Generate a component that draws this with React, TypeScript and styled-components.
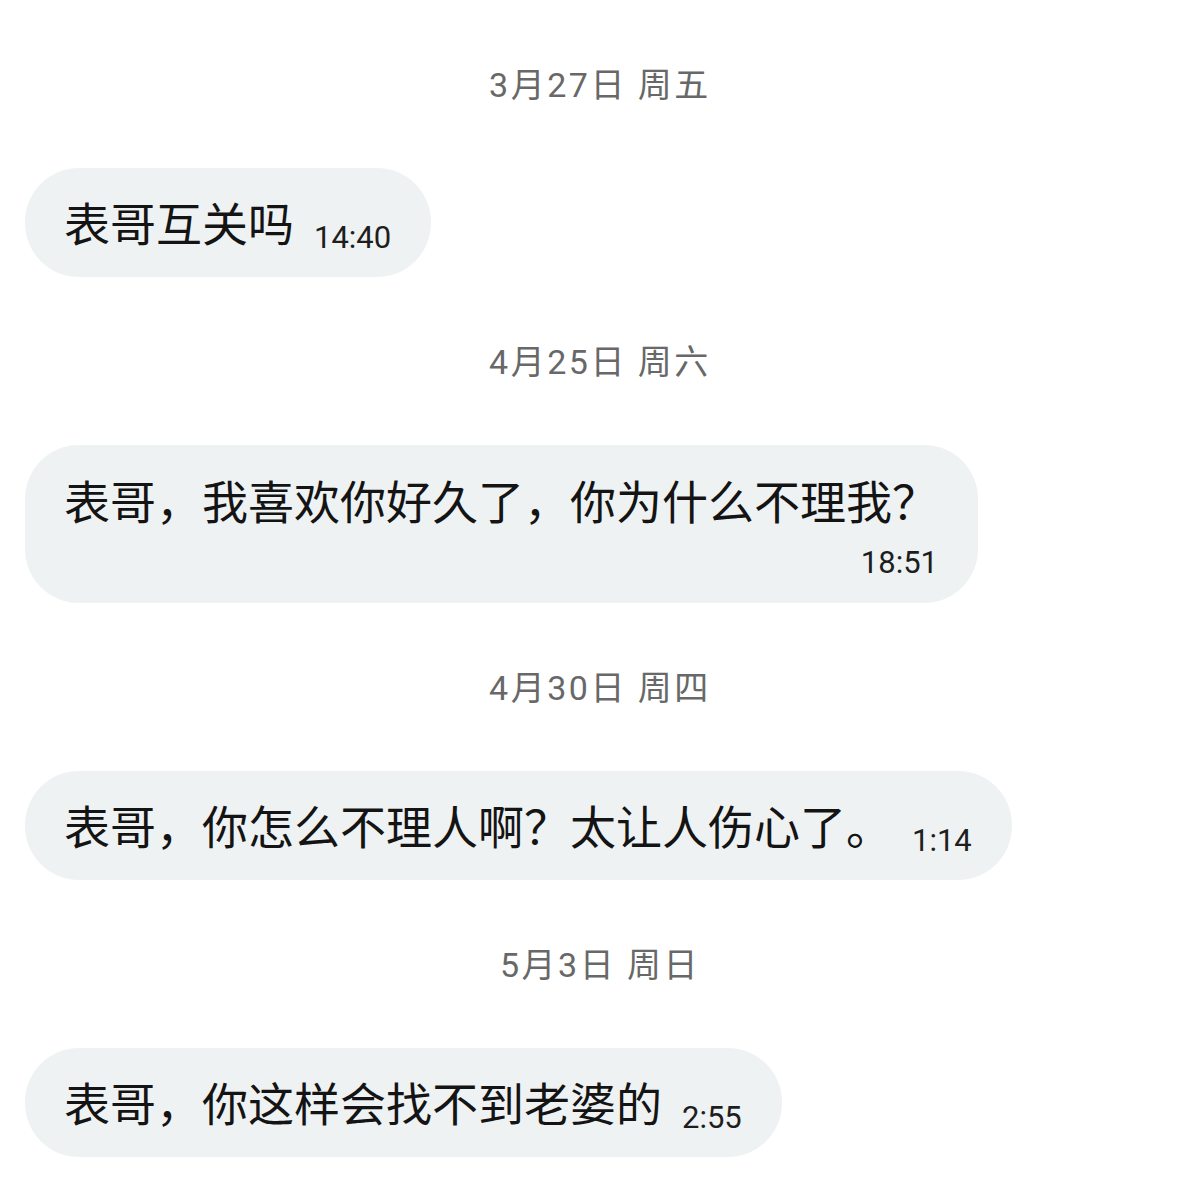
import styled, { createGlobalStyle } from 'styled-components'

const GlobalStyle = createGlobalStyle`
  html, body { margin: 0; padding: 0; background: #ffffff; }
  body { font-family: 'Liberation Sans', 'Noto Sans CJK SC', sans-serif; }
`

const Page = styled.main`
  width: 1200px;
  min-height: 1189px;
  padding-top: 60px;
  box-sizing: border-box;
  background: #fff;
`

const DayGroup = styled.section`
  display: flex;
  flex-direction: column;
`

const DateLabel = styled.div`
  height: 50px;
  line-height: 50px;
  text-align: center;
  font-family: 'Roboto', 'Noto Sans CJK SC', sans-serif;
  font-size: 34px;
  letter-spacing: 2.5px;
  color: #686868;
  margin-bottom: 58px;
`

const MessageRow = styled.div`
  display: flex;
  padding: 0 25px;
  margin-bottom: 60px;
`

const Bubble = styled.div<{ $stacked?: boolean }>`
  background: #eff2f3;
  border-radius: 54px;
  padding: ${({ $stacked }) => ($stacked ? '25px 40px 22px 39px' : '24px 40px 24px 39px')};
  display: ${({ $stacked }) => ($stacked ? 'flex' : 'block')};
  flex-direction: column;
  color: #141414;
`

const Text = styled.span`
  font-family: 'Noto Sans CJK SC', sans-serif;
  font-size: 46px;
  line-height: 58px;
`

const Time = styled.span<{ $stacked?: boolean }>`
  font-family: 'Roboto', 'Liberation Sans', sans-serif;
  font-size: 31px;
  line-height: ${({ $stacked }) => ($stacked ? '36px' : '1')};
  color: #1e1e1e;
  margin-left: ${({ $stacked }) => ($stacked ? '0' : '20px')};
  margin-top: ${({ $stacked }) => ($stacked ? '17px' : '0')};
  align-self: flex-end;
  vertical-align: -7px;
`

const MESSAGES = [
  { date: '3月27日 周五', text: '表哥互关吗', time: '14:40' },
  { date: '4月25日 周六', text: '表哥，我喜欢你好久了，你为什么不理我？', time: '18:51', stacked: true },
  { date: '4月30日 周四', text: '表哥，你怎么不理人啊？太让人伤心了。', time: '1:14' },
  { date: '5月3日 周日', text: '表哥，你这样会找不到老婆的', time: '2:55' },
]

export default function App() {
  return (
    <>
      <GlobalStyle />
      <Page>
        {MESSAGES.map(m => (
          <DayGroup key={m.date}>
            <DateLabel>{m.date}</DateLabel>
            <MessageRow>
              <Bubble $stacked={m.stacked}>
                <Text>{m.text}</Text>
                <Time $stacked={m.stacked}>{m.time}</Time>
              </Bubble>
            </MessageRow>
          </DayGroup>
        ))}
      </Page>
    </>
  )
}
